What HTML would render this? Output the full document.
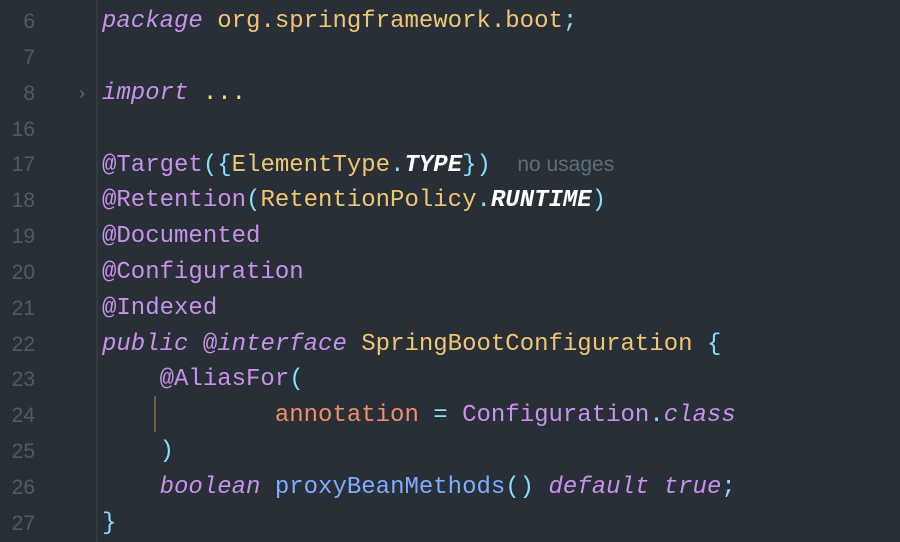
<!DOCTYPE html>
<html><head><meta charset="utf-8"><style>
html,body{margin:0;padding:0}
body{width:900px;height:542px;background:#282f36;overflow:hidden;position:relative;font-family:"Liberation Mono",monospace;font-size:24px}
.g{position:absolute;left:96px;top:0;width:2px;height:542px;background:#323b42}
.l{position:absolute;left:102px;height:36px;line-height:36px;white-space:pre;color:#c792ea;margin-top:2px}
.n{position:absolute;left:0;width:35px;text-align:right;height:36px;line-height:36px;color:#4f5d63;font-family:"Liberation Sans",sans-serif;font-size:21px;margin-top:2px}
.k{color:#c792ea;font-style:italic}
.a{color:#c792ea}
.y{color:#f0c674}
.c{color:#89ddff}
.w{color:#fff;font-weight:bold;font-style:italic}
.o{color:#f08d6a}
.b{color:#82aaff}
.d{color:#e8e86a}
.u{color:#5f6d75;font-family:"Liberation Sans",sans-serif;font-size:21px}
.guide{position:absolute;left:154px;top:396px;width:2px;height:36px;background:#6b5e44}
</style></head><body>
<div class="g"></div>
<div class="n" style="top:2px">6</div>
<div class="n" style="top:38px">7</div>
<div class="n" style="top:74px">8</div>
<div class="n" style="top:110px">16</div>
<div class="n" style="top:145px">17</div>
<div class="n" style="top:181px">18</div>
<div class="n" style="top:217px">19</div>
<div class="n" style="top:253px">20</div>
<div class="n" style="top:289px">21</div>
<div class="n" style="top:325px">22</div>
<div class="n" style="top:360px">23</div>
<div class="n" style="top:396px">24</div>
<div class="n" style="top:432px">25</div>
<div class="n" style="top:468px">26</div>
<div class="n" style="top:504px">27</div>
<div style="position:absolute;left:79px;top:76px;height:36px;line-height:34px;color:#5f6d75;font-family:'Liberation Sans',sans-serif;font-size:18px">›</div>
<div class="l" style="top:2px"><span class="k">package</span> <span class="y">org.springframework.boot</span><span class="c">;</span></div>
<div class="l" style="top:74px"><span class="k">import</span> <span class="d">...</span></div>
<div class="l" style="top:145px"><span class="a">@Target</span><span class="c">({</span><span class="y">ElementType</span><span class="c">.</span><span class="w">TYPE</span><span class="c">})</span> <span class="u" style="margin-left:12px">no usages</span></div>
<div class="l" style="top:181px"><span class="a">@Retention</span><span class="c">(</span><span class="y">RetentionPolicy</span><span class="c">.</span><span class="w">RUNTIME</span><span class="c">)</span></div>
<div class="l" style="top:217px">@Documented</div>
<div class="l" style="top:253px">@Configuration</div>
<div class="l" style="top:289px">@Indexed</div>
<div class="l" style="top:325px"><span class="k">public</span> <span class="a">@</span><span class="k">interface</span> <span class="y">SpringBootConfiguration</span> <span class="c">{</span></div>
<div class="l" style="top:360px">    @AliasFor<span class="c">(</span></div>
<div class="guide"></div>
<div class="l" style="top:396px">            <span class="o">annotation</span> <span class="c">=</span> <span class="a">Configuration</span><span class="c">.</span><span class="k">class</span></div>
<div class="l" style="top:432px">    <span class="c">)</span></div>
<div class="l" style="top:468px">    <span class="k">boolean</span> <span class="b">proxyBeanMethods</span><span class="c">()</span> <span class="k">default</span> <span class="k">true</span><span class="c">;</span></div>
<div class="l" style="top:504px"><span class="c">}</span></div>
</body></html>
